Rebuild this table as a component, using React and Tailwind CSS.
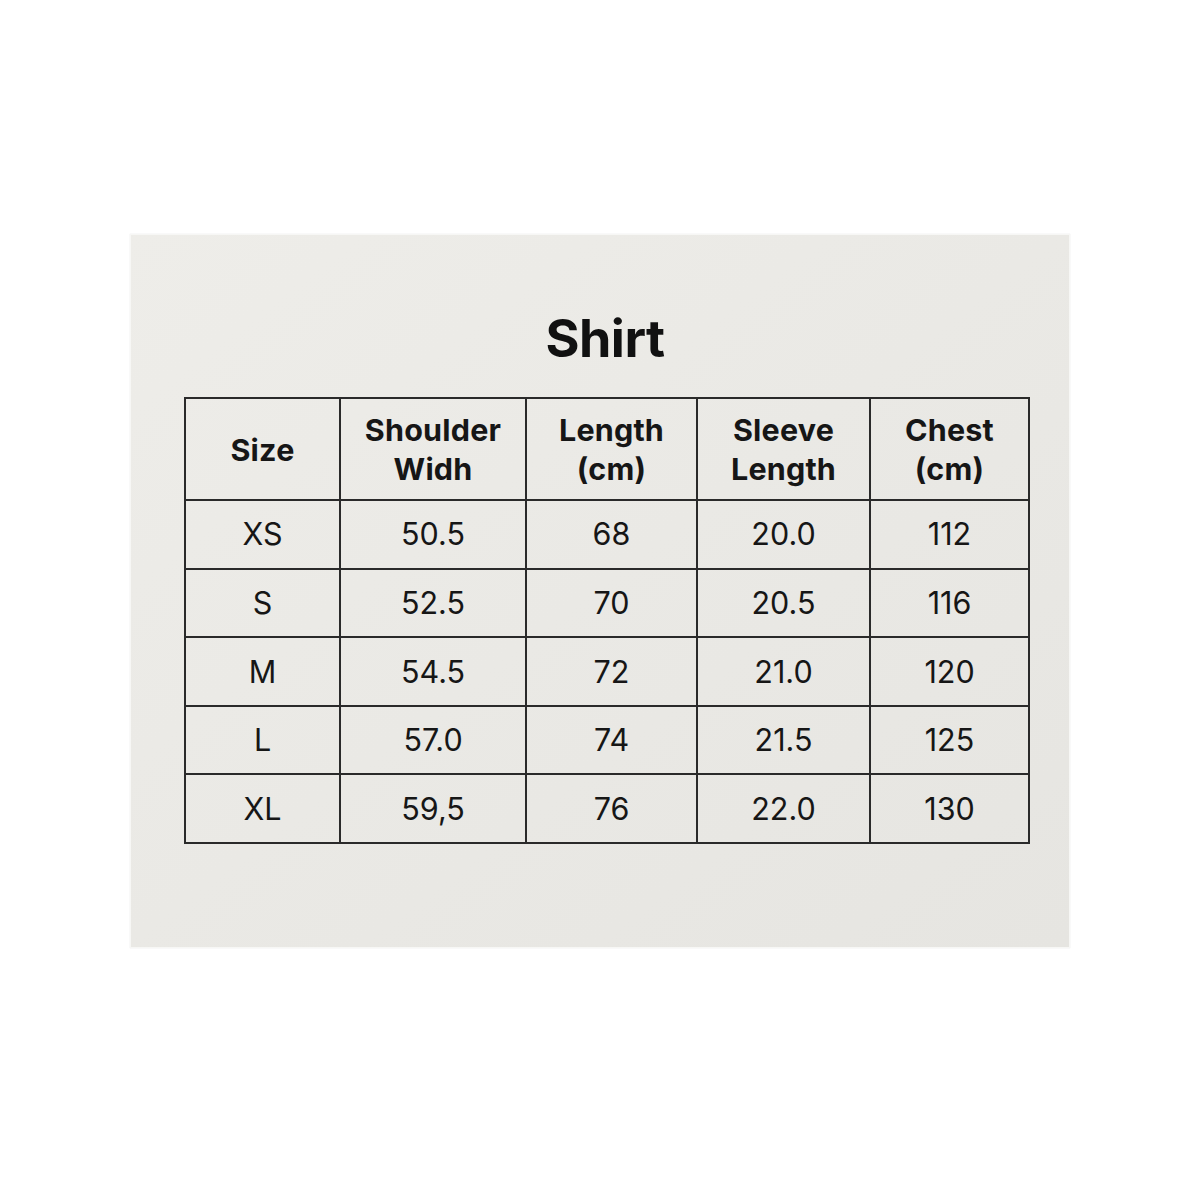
import React from "react";

const headers = [
  ["Size"],
  ["Shoulder", "Widh"],
  ["Length", "(cm)"],
  ["Sleeve", "Length"],
  ["Chest", "(cm)"],
];

const rows = [
  ["XS", "50.5", "68", "20.0", "112"],
  ["S", "52.5", "70", "20.5", "116"],
  ["M", "54.5", "72", "21.0", "120"],
  ["L", "57.0", "74", "21.5", "125"],
  ["XL", "59,5", "76", "22.0", "130"],
];

const widths = ["w-[155px]", "w-[186px]", "w-[171px]", "w-[173px]", "w-[159px]"];

export default function App() {
  return (
    <div className="w-[1200px] h-[1200px] bg-white pt-[234px] pl-[130px]" style={{ fontFamily: "Inter, 'Liberation Sans', sans-serif" }}>
      <div className="w-[940px] h-[714px] bg-gradient-to-br from-[#eeede9] to-[#e6e5e1] border border-[#f7f7f5] shadow-[0_0_1px_rgba(0,0,0,0.15)] pt-[72px]">
        <h1 className="text-center text-[52px] leading-[64px] font-bold text-[#111] tracking-[-0.5px] ml-[10px]">Shirt</h1>
        <table className="ml-[53px] mt-[26px] border-collapse text-[#161616]">
          <thead>
            <tr className="h-[102px]">
              {headers.map((h, i) => (
                <th key={i} className={`${widths[i]} border-2 border-[#2a2a2a] text-[30.5px] leading-[39px] font-bold text-center align-middle p-0 tracking-[0.2px]`}>
                  {h.map((line, j) => (
                    <div key={j}>{line}</div>
                  ))}
                </th>
              ))}
            </tr>
          </thead>
          <tbody>
            {rows.map((r, ri) => (
              <tr key={ri} className="h-[68.6px]">
                {r.map((c, ci) => (
                  <td key={ci} className={`${widths[ci]} border-2 border-[#2a2a2a] text-[30.5px] font-normal text-center align-middle p-0`}>
                    {c}
                  </td>
                ))}
              </tr>
            ))}
          </tbody>
        </table>
      </div>
    </div>
  );
}
